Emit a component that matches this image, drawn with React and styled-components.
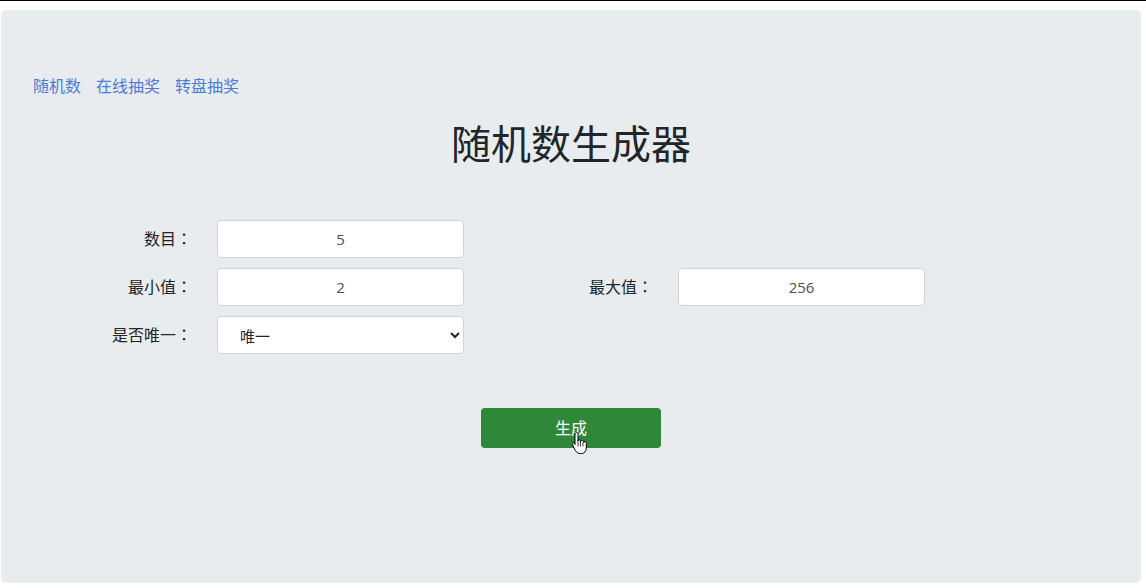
import React from 'react';
import styled, { createGlobalStyle } from 'styled-components';

const GlobalStyle = createGlobalStyle`
  html, body {
    margin: 0;
    padding: 0;
    background: #fff;
  }
  body {
    border-top: 1px solid #000;
    font-family: "Noto Sans", "Noto Sans CJK SC", sans-serif;
    color: #212529;
  }
`;

const Panel = styled.div`
  margin: 9px 5px 0 1px;
  height: 573px;
  box-sizing: border-box;
  padding: 63px 32px 0 32px;
  background: #e9ecef;
  border-radius: 5px;
`;

const Nav = styled.nav`
  display: flex;
  gap: 15px;
  font-size: 16px;
  line-height: 24px;
`;

const NavLink = styled.a`
  color: #4d7bd8;
  text-decoration: none;
  font-family: "Noto Sans CJK SC", sans-serif;
`;

const Title = styled.h1`
  margin: 21px 0 54px;
  text-align: center;
  font-family: "Noto Sans CJK SC", sans-serif;
  font-weight: 400;
  font-size: 40px;
  line-height: 48px;
  color: #212529;
`;

const Form = styled.div`
  display: grid;
  grid-template-columns: 159px 247px 164px 247px;
  column-gap: 25px;
  row-gap: 10px;
  align-items: center;
`;

const Label = styled.label`
  text-align: right;
  font-family: "Noto Sans CJK SC", sans-serif;
  font-size: 16px;
  line-height: 20px;
  padding-bottom: 3px;
  color: #212529;
`;

/* centred full-width colon, as in the reference font */
const Colon = styled.span`
  font-family: "Noto Sans CJK TC", sans-serif;
`;

const Field = styled.input`
  box-sizing: border-box;
  height: 38px;
  width: 100%;
  border: 1px solid #ced4da;
  border-radius: 4px;
  background: #fff;
  text-align: center;
  font-family: "Open Sans", "Noto Sans CJK SC", sans-serif;
  font-size: 15px;
  color: #495057;
  outline: none;
`;

const Select = styled.select`
  box-sizing: border-box;
  height: 38px;
  width: 100%;
  border: 1px solid #ced4da;
  border-radius: 4px;
  background: #fff;
  padding: 0 4px 0 18px;
  font-family: "Noto Sans CJK SC", sans-serif;
  font-size: 15px;
  color: #212529;
  outline: none;
`;

const Spacer = styled.div`
  grid-column: span 2;
`;

const Actions = styled.div`
  display: flex;
  justify-content: center;
  margin-top: 54px;
`;

const ButtonWrap = styled.div`
  position: relative;
`;

const Button = styled.button`
  width: 180px;
  height: 40px;
  padding: 0 0 2px;
  border: none;
  border-radius: 4px;
  background: #2f883a;
  color: #fff;
  font-family: "Noto Sans CJK SC", sans-serif;
  font-size: 16px;
  cursor: pointer;
`;

const Cursor = styled.svg`
  position: absolute;
  left: 91px;
  top: 23px;
  pointer-events: none;
`;

const HandCursor = () => (
  <Cursor width="16" height="26" viewBox="0 0 16 26">
    <path
      d="M4.5 1.5c-.9 0-1.5.7-1.5 1.6v10.4l-1-1.2c-.7-.8-1.8-.8-2 .2l2.6 5.6c1 2.3 2.7 4.4 5.6 4.4h1.3c2.8 0 4.8-2.2 4.8-5.4v-5.2c0-.9-.6-1.5-1.300-1.5s-1.3.6-1.3 1.4v-.8c0-.9-.6-1.5-1.3-1.5S8.4 10.1 8.4 11v-.8c0-.9-.6-1.5-1.3-1.500S6 9.3 6 10.1V3.1c0-.9-.6-1.6-1.5-1.6z"
      fill="#fff"
      stroke="#000"
      strokeWidth="1"
    />
    <path d="M8.4 11v4.5M10.9 11.7v3.8M6 10.1v5.4" stroke="#000" strokeWidth="0.8" />
  </Cursor>
);

const App = () => {
  return (
    <>
      <GlobalStyle />
      <Panel>
        <Nav>
          <NavLink href="#">随机数</NavLink>
          <NavLink href="#">在线抽奖</NavLink>
          <NavLink href="#">转盘抽奖</NavLink>
        </Nav>
        <Title>随机数生成器</Title>
        <Form>
          <Label>数目<Colon>：</Colon></Label>
          <Field defaultValue="5" />
          <Spacer />

          <Label>最小值<Colon>：</Colon></Label>
          <Field defaultValue="2" />
          <Label>最大值<Colon>：</Colon></Label>
          <Field defaultValue="256" />

          <Label>是否唯一<Colon>：</Colon></Label>
          <Select defaultValue="1">
            <option value="1">唯一</option>
            <option value="0">不唯一</option>
          </Select>
          <Spacer />
        </Form>
        <Actions>
          <ButtonWrap>
            <Button>生成</Button>
            <HandCursor />
          </ButtonWrap>
        </Actions>
      </Panel>
    </>
  );
};

export default App;
